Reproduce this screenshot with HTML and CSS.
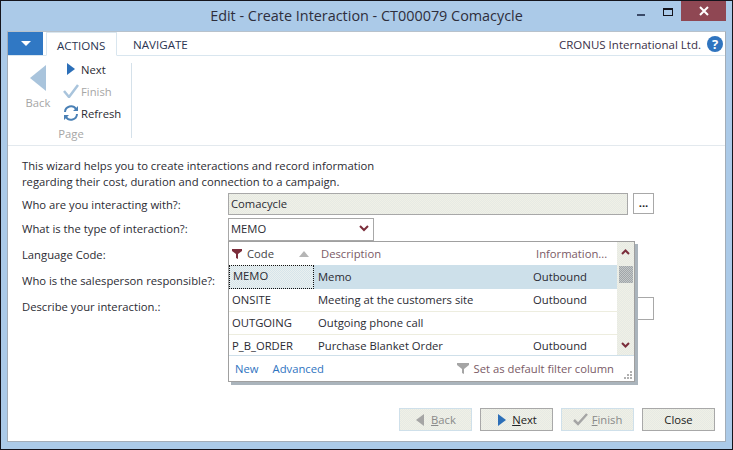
FILE: index.html
```html
<!DOCTYPE html>
<html lang="en">
<head>
  <meta charset="UTF-8" />
  <title>Edit - Create Interaction</title>
  <link rel="stylesheet" href="styles.css">
</head>
<body>
  <div class="window">
    <div class="titlebar">
      <span class="title">Edit - Create Interaction - CT000079 Comacycle</span>
      <div class="winbtns">
        <span class="minbtn"></span>
        <span class="maxbtn"></span>
        <span class="closebtn">
          <svg width="12" height="12" viewBox="0 0 12 12"><path d="M2 2L10 10M10 2L2 10" stroke="#fff" stroke-width="2"/></svg>
        </span>
      </div>
    </div>

    <div class="content">
      <div class="tabs">
        <div class="appmenu"><svg width="10" height="6" viewBox="0 0 10 6"><path d="M0 0H10L5 5Z" fill="#fff"/></svg></div>
        <div class="tab active">ACTIONS</div>
        <div class="tab">NAVIGATE</div>
        <div class="company">CRONUS International Ltd.</div>
        <div class="help">?</div>
      </div>

      <div class="ribbon">
        <div class="group">
          <div class="group-items">
            <div class="backbtn">
              <svg width="16" height="26" viewBox="0 0 16 26"><path d="M16 0V26L0 13Z" fill="#a9c4dc"/></svg>
              <span>Back</span>
            </div>
            <div class="small-btns">
              <div class="small-btn">
                <svg width="16" height="14" viewBox="0 0 16 14"><path d="M4 1V13L12 7Z" fill="#2c6fb8"/></svg>
                <span>Next</span>
              </div>
              <div class="small-btn disabled">
                <svg width="16" height="14" viewBox="0 0 16 14"><path d="M1 7L6 13L15 1" fill="none" stroke="#a9c4dc" stroke-width="2.5"/></svg>
                <span>Finish</span>
              </div>
              <div class="small-btn">
                <svg width="16" height="16" viewBox="0 0 16 16"><path d="M2 7A6 6 0 0 1 13 4M14 9A6 6 0 0 1 3 12" fill="none" stroke="#4a80b5" stroke-width="2"/><path d="M15 1V6H10ZM1 15V10H6Z" fill="#4a80b5"/></svg>
                <span>Refresh</span>
              </div>
            </div>
          </div>
          <div class="group-label">Page</div>
        </div>
      </div>

      <div class="form">
        <p class="intro">This wizard helps you to create interactions and record information<br>regarding their cost, duration and connection to a campaign.</p>
        <div class="row first">
          <label>Who are you interacting with?:</label>
          <div class="field readonly">Comacycle</div>
          <div class="dots">...</div>
        </div>
        <div class="row">
          <label>What is the type of interaction?:</label>
          <div class="field select">MEMO
            <svg width="10" height="7" viewBox="0 0 10 7"><path d="M1 1L5 5L9 1" fill="none" stroke="#7b2d3b" stroke-width="2"/></svg>
          </div>
        </div>
        <div class="row"><label>Language Code:</label></div>
        <div class="row"><label>Who is the salesperson responsible?:</label></div>
        <div class="row">
          <label>Describe your interaction.:</label>
          <div class="field wide"></div>
        </div>

        <div class="popup">
          <div class="popup-main">
            <div class="grid">
              <div class="grid-row head">
                <div class="c1">
                  <svg width="10" height="10" viewBox="0 0 10 10"><path d="M0 0H10V2L6 5V10L4 9V5L0 2Z" fill="#7b2d3b"/></svg>
                  <span class="code-label">Code</span>
                  <svg class="sort" width="10" height="6" viewBox="0 0 10 6"><path d="M5 0L10 6H0Z" fill="#b5b5b5"/></svg>
                </div>
                <div class="c2">Description</div>
                <div class="c3">Information...</div>
              </div>
              <div class="grid-row selected">
                <div class="c1"><span class="focus">MEMO</span></div>
                <div class="c2">Memo</div>
                <div class="c3">Outbound</div>
              </div>
              <div class="grid-row">
                <div class="c1">ONSITE</div>
                <div class="c2">Meeting at the customers site</div>
                <div class="c3">Outbound</div>
              </div>
              <div class="grid-row">
                <div class="c1">OUTGOING</div>
                <div class="c2">Outgoing phone call</div>
                <div class="c3"></div>
              </div>
              <div class="grid-row last">
                <div class="c1">P_B_ORDER</div>
                <div class="c2">Purchase Blanket Order</div>
                <div class="c3">Outbound</div>
              </div>
            </div>
            <div class="scrollbar">
              <svg width="9" height="6" viewBox="0 0 9 6"><path d="M1 5L4.5 1.5L8 5" fill="none" stroke="#7b2d3b" stroke-width="2"/></svg>
              <span class="thumb"></span>
              <svg class="down" width="9" height="6" viewBox="0 0 9 6"><path d="M1 1L4.5 4.5L8 1" fill="none" stroke="#7b2d3b" stroke-width="2"/></svg>
            </div>
          </div>
          <div class="popup-foot">
            <a>New</a>
            <a>Advanced</a>
            <span class="filter">
              <svg width="12" height="11" viewBox="0 0 12 11"><path d="M0 0H12V2L7 6V11L5 10V6L0 2Z" fill="#a5a5a5"/></svg>
              Set as default filter column
            </span>
            <svg class="grip" width="9" height="9" viewBox="0 0 9 9"><path d="M6 0h2v2H6zM3 3h2v2H3zM6 3h2v2H6zM0 6h2v2H0zM3 6h2v2H3zM6 6h2v2H6z" fill="#b0b0b0"/></svg>
          </div>
        </div>
      </div>

      <div class="buttons">
        <div class="btn disabled"><svg width="12" height="14" viewBox="0 0 12 14"><path d="M9 1V13L1 7Z" fill="#a5a5a5"/></svg><span><u>B</u>ack</span></div>
        <div class="btn primary"><svg width="12" height="14" viewBox="0 0 12 14"><path d="M2 1V13L10 7Z" fill="#2c6fb8"/></svg><span><u>N</u>ext</span></div>
        <div class="btn disabled"><svg width="15" height="13" viewBox="0 0 15 13"><path d="M1 7L5 11L14 1" fill="none" stroke="#a5a5a5" stroke-width="2.5"/></svg><span><u>F</u>inish</span></div>
        <div class="btn close">Close</div>
      </div>
    </div>
  </div>
</body>
</html>
```

FILE: styles.css
```css
* {
  box-sizing: border-box;
}
html, body {
  margin: 0;
  height: 100%;
}
body {
  font-family: "Open Sans", "Noto Sans", Arial, sans-serif;
  font-size: 11.25px;
  color: #2b2b33;
  background: #abcae8;
  overflow: hidden;
}
.window {
  width: 733px;
  height: 450px;
  border: 1px solid #14141c;
  padding: 0 6px 7px 6px;
  display: flex;
  flex-direction: column;
}
.titlebar {
  height: 30px;
  flex: none;
  position: relative;
  text-align: center;
  font-size: 14.4px;
  line-height: 29px;
  color: #2e2e3c;
}
.winbtns {
  position: absolute;
  top: 0;
  right: 0;
  display: flex;
  align-items: flex-start;
}
.minbtn {
  width: 8px;
  height: 2px;
  margin: 13px 18px 0 0;
  background: #3a4a68;
}
.maxbtn {
  width: 10px;
  height: 8px;
  margin: 7px 8px 0 0;
  border: 1px solid #14141c;
  border-top-width: 2px;
}
.closebtn {
  width: 45px;
  height: 20px;
  background: #8f4753;
  display: flex;
  align-items: center;
  justify-content: center;
}
.content {
  flex: 1;
  background: #fff;
  border: 1px solid #a3adb8;
  border-top-color: #b8c2cc;
  display: flex;
  flex-direction: column;
  position: relative;
}
.tabs {
  height: 24px;
  flex: none;
  display: flex;
  align-items: stretch;
  border-bottom: 1px solid #d9e6ef;
}
.appmenu {
  width: 35px;
  height: 23px;
  background: #3078c4;
  display: flex;
  align-items: center;
  justify-content: center;
}
.tab {
  padding: 0 11px;
  line-height: 26px;
  font-size: 11.6px;
  color: #2b3552;
}
.tab.active {
  width: 71px;
  margin-left: 3px;
  padding: 0 10px;
  border: 1px solid #d9e6ef;
  border-bottom: 1px solid #fff;
  height: 24px;
  line-height: 25px;
}
.tab + .tab {
  margin-left: 5px;
}
.company {
  margin-left: auto;
  line-height: 26px;
  font-size: 11.5px;
  color: #3a3048;
}
.help {
  width: 16px;
  height: 16px;
  margin: 4px 2px 0 6px;
  border-radius: 50%;
  background: #2f74bf;
  color: #fff;
  font-weight: bold;
  font-size: 13px;
  line-height: 16px;
  text-align: center;
}
.ribbon {
  height: 90px;
  flex: none;
  border-bottom: 1px solid #e3e9ee;
  padding-top: 7px;
  display: flex;
}
.group {
  width: 124px;
  height: 75px;
  border-right: 1px solid #d5e1ea;
  display: flex;
  flex-direction: column;
}
.group-items {
  display: flex;
  height: 62px;
  flex: none;
}
.backbtn {
  width: 51px;
  display: flex;
  flex-direction: column;
  align-items: center;
  gap: 4px;
  padding: 2px 0 0 9px;
  color: #a6a6a6;
}
.small-btns {
  display: flex;
  flex-direction: column;
  margin: -5px 0 0 3px;
}
.small-btn {
  height: 22px;
  flex: none;
  display: flex;
  align-items: center;
  gap: 2px;
  margin-left: 1px;
}
.small-btn.disabled {
  color: #a6a6a6;
}
.group-label {
  margin-top: 1px;
  text-align: center;
  color: #a6a6a6;
  padding-left: 3px;
}
.form {
  flex: 1;
  position: relative;
  padding: 12px 0 0 14px;
}
.intro {
  margin: 0 0 3px 0;
  line-height: 16px;
}
.row {
  display: flex;
  align-items: flex-start;
  height: 26px;
  position: relative;
}
.row.first {
  height: 25px;
}
.row label {
  width: 206px;
  flex: none;
  line-height: 22px;
  white-space: nowrap;
}
.row.first label {
  line-height: 24px;
}
.field {
  height: 23px;
  border: 1px solid #a8a8a8;
  padding-left: 2px;
  line-height: 20px;
}
.field.readonly {
  width: 400px;
  height: 22px;
  background: repeating-conic-gradient(#f0f0e6 0 25%, #e6eae4 0 50%) 0 0/2px 2px;
}
.dots {
  width: 21px;
  height: 21px;
  margin-left: 5px;
  border: 1px solid #a8a8a8;
  text-align: center;
  font-weight: bold;
  line-height: 17px;
  color: #222;
}
.field.select {
  width: 146px;
  display: flex;
  align-items: center;
  justify-content: space-between;
  padding-right: 4px;
  padding-bottom: 2px;
}
.field.wide {
  width: 426px;
  margin-top: 1px;
}
.popup {
  position: absolute;
  left: 220px;
  top: 95px;
  width: 407px;
  height: 141px;
  background: #fff;
  border: 1px solid #a0a0a0;
  box-shadow: 3px 3px 0 #aab4bc;
  display: flex;
  flex-direction: column;
}
.popup-main {
  display: flex;
  height: 114px;
  flex: none;
  border-bottom: 1px solid #cfe0ea;
}
.grid {
  width: 388px;
}
.grid-row {
  height: 23px;
  display: flex;
  align-items: center;
  padding-bottom: 2px;
  border-bottom: 1px solid #ededdf;
  white-space: nowrap;
}
.grid-row.head {
  height: 23px;
  padding-bottom: 0;
  border-bottom: 0;
  color: #7a5a66;
}
.grid-row.last {
  border-bottom: 0;
}
.grid-row.selected {
  background: #cde0ea;
  height: 24px;
  padding-bottom: 0;
  border-bottom: 0;
}
.c1 {
  width: 87px;
  flex: none;
  padding-left: 3px;
  height: 100%;
  display: flex;
  align-items: center;
  gap: 5px;
}
.head .c1 {
  color: #444;
}
.sort {
  margin-left: 20px;
}
.selected .c1 {
  padding: 0;
}
.focus {
  width: 85px;
  height: 100%;
  padding-left: 3px;
  line-height: 20px;
  background: repeating-conic-gradient(#eaf0f0 0 25%, #d6e4ea 0 50%) 0 0/2px 2px;
  border: 1px dotted #111;
}
.c2 {
  width: 217px;
  flex: none;
  padding-left: 2px;
}
.selected .c2, .selected .c3 {
  margin-top: -2px;
}
.head .c2 {
  padding-left: 5px;
}
.c3 {
  flex: 1;
}
.head .c3 {
  padding-left: 3px;
}
.scrollbar {
  flex: 1;
  background: repeating-conic-gradient(#f0f0e6 0 25%, #e6eae4 0 50%) 0 0/2px 2px;
  display: flex;
  flex-direction: column;
  align-items: center;
  padding-top: 7px;
  position: relative;
}
.thumb {
  width: 14px;
  height: 17px;
  margin-top: 11px;
  background: repeating-conic-gradient(#c4c8c8 0 25%, #a0a6aa 0 50%) 0 0/2px 2px;
}
.scrollbar .down {
  margin-top: auto;
  margin-bottom: 7px;
}
.popup-foot {
  flex: 1;
  display: flex;
  align-items: center;
  padding: 0 6px;
  gap: 14px;
  color: #2f74bf;
  position: relative;
}
.filter {
  margin-left: auto;
  margin-right: 14px;
  display: flex;
  align-items: center;
  gap: 5px;
  color: #7a5a66;
}
.grip {
  position: absolute;
  right: 1px;
  bottom: 1px;
}
.buttons {
  position: absolute;
  right: 10px;
  bottom: 10px;
  display: flex;
  gap: 8px;
}
.btn {
  width: 73px;
  height: 23px;
  background: repeating-conic-gradient(#f0f0e6 0 25%, #e6eae4 0 50%) 0 0/2px 2px;
  border: 1px solid #a8a8a8;
  display: flex;
  align-items: center;
  justify-content: center;
  gap: 4px;
  color: #222;
}
.btn.disabled {
  border-color: #cfe0ea;
  color: #8a8a8a;
}
```
